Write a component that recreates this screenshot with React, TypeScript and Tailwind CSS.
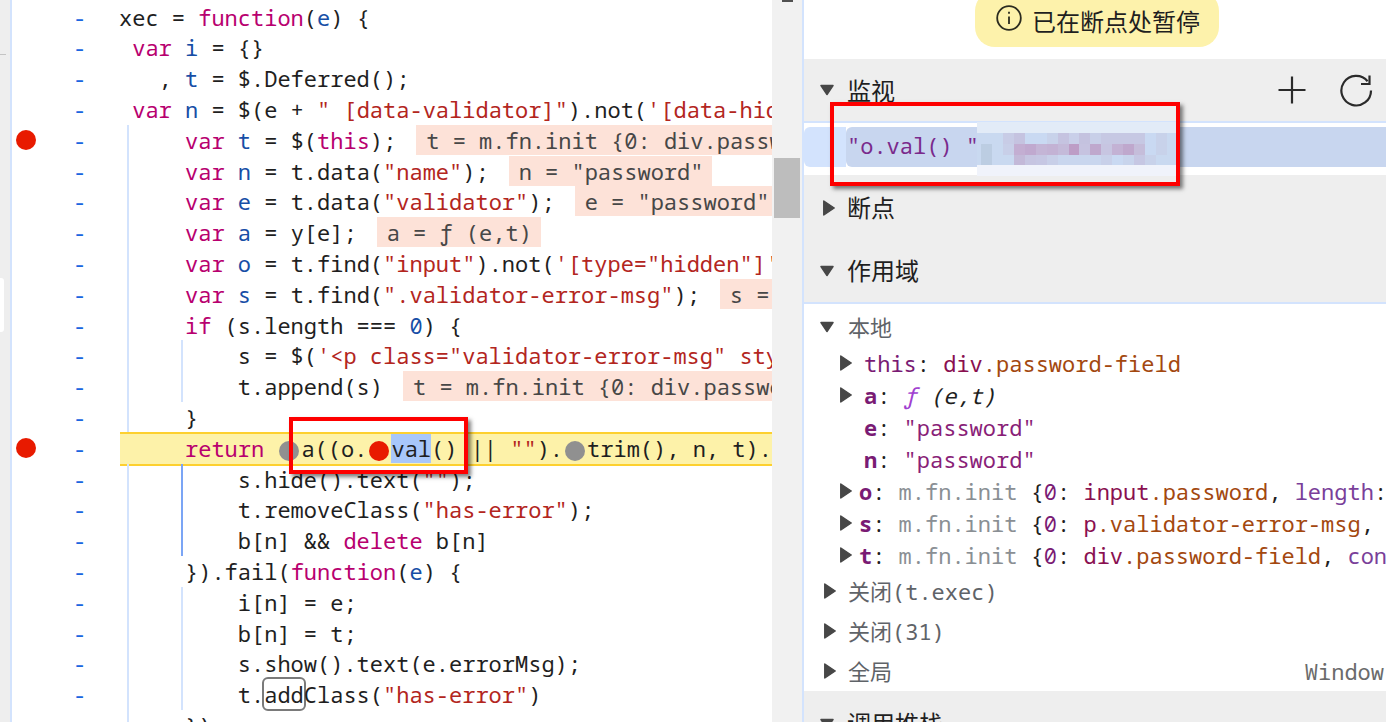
import type { ReactNode } from 'react'

const K = ({ children }: { children: ReactNode }) => <span className="text-[#b8006f]">{children}</span>
const D = ({ children }: { children: ReactNode }) => <span className="text-[#174ea6]">{children}</span>
const S = ({ children }: { children: ReactNode }) => <span className="text-[#b3261e]">{children}</span>

// inline debugger value next to a code line
const V = ({ children }: { children: ReactNode }) => (
  <span className="inline-block h-[30px] leading-[30px] ml-[20px] pl-[10px] pr-[9px] bg-[#fde2d8] text-[#474747] align-top">
    {children}
  </span>
)

const Dot = ({ red }: { red?: boolean }) => (
  <span className={`inline-block w-5 h-5 mx-[2px] rounded-full align-[-4px] ${red ? 'bg-[#e81a00]' : 'bg-[#909090]'}`} />
)

type Line = {
  code: ReactNode
  bp?: boolean
  guide?: boolean
  inner?: 'light' | 'strong'
  exec?: boolean
}

const LINES: Line[] = [
  { code: <>xec = <K>function</K>(<D>e</D>) {'{'}</> },
  { code: <> <K>var</K> <D>i</D> = {'{}'}</> },
  { code: <>   , <D>t</D> = $.Deferred();</> },
  { code: <> <K>var</K> <D>n</D> = $(e + <S>" [data-validator]"</S>).not(<S>'[data-hidden]'</S>)</> },
  { guide: true, bp: true, code: <>     <K>var</K> <D>t</D> = $(<K>this</K>);<V>t = m.fn.init {'{'}0: div.password-field{'}'}</V></> },
  { guide: true, code: <>     <K>var</K> <D>n</D> = t.data(<S>"name"</S>);<V>n = "password"</V></> },
  { guide: true, code: <>     <K>var</K> <D>e</D> = t.data(<S>"validator"</S>);<V>e = "password"</V></> },
  { guide: true, code: <>     <K>var</K> <D>a</D> = y[e];<V>a = ƒ (e,t)</V></> },
  { guide: true, code: <>     <K>var</K> <D>o</D> = t.find(<S>"input"</S>).not(<S>'[type="hidden"]'</S>)</> },
  { guide: true, code: <>     <K>var</K> <D>s</D> = t.find(<S>".validator-error-msg"</S>);<V>s = m.fn.init</V></> },
  { guide: true, code: <>     <K>if</K> (s.length === <D>0</D>) {'{'}</> },
  { guide: true, inner: 'light', code: <>         s = $(<S>'&lt;p class="validator-error-msg" style="display:none"&gt;'</S>)</> },
  { guide: true, inner: 'light', code: <>         t.append(s)<V>t = m.fn.init {'{'}0: div.password-field{'}'}</V></> },
  { guide: true, code: <>     {'}'}</> },
  {
    bp: true,
    exec: true,
    code: (
      <>
        {'     '}<K>return</K> <Dot />a((o.<Dot red /><span className="bg-[#a8c7fa]">val</span>() || <S>""</S>).<Dot />trim(), n, t).done(function
      </>
    ),
  },
  { guide: true, inner: 'strong', code: <>         s.hide().text(<S>""</S>);</> },
  { guide: true, inner: 'strong', code: <>         t.removeClass(<S>"has-error"</S>);</> },
  { guide: true, inner: 'strong', code: <>         b[n] &amp;&amp; <K>delete</K> b[n]</> },
  { guide: true, code: <>     {'}'}).fail(<K>function</K>(<D>e</D>) {'{'}</> },
  { guide: true, inner: 'light', code: <>         i[n] = e;</> },
  { guide: true, inner: 'light', code: <>         b[n] = t;</> },
  { guide: true, inner: 'light', code: <>         s.show().text(e.errorMsg);</> },
  {
    guide: true,
    inner: 'light',
    code: <>         t.<span className="inline-block h-[30px] leading-[30px] outline-2 outline-[#7a7a7a] rounded-[4px] align-top">add</span>Class(<S>"has-error"</S>)</>,
  },
  { guide: true, code: <>     {'}'})</> },
]

const BLUR_X = [981, 992, 1003, 1014, 1025, 1036, 1047, 1058, 1069, 1079, 1090, 1101, 1112, 1123, 1134, 1145, 1156, 1167]
const BLUR_ROWS: { y: number; h: number; cells: string[] }[] = [
  {
    y: 11,
    h: 11,
    cells: ['c9d9f0', 'c9d9f0', 'c8cce6', 'c5c3e0', 'c9d9f2', 'c9d9f2', 'c8d2ea', 'c5c3e0', 'c9cfe9', 'c4c2df', 'c8cfe8', 'c6c8e3', 'c6c8e3', 'c6c8e3', 'c6c8e3', 'c9d9f2', 'c8d2ea', 'c9d9f0'],
  },
  {
    y: 22,
    h: 11,
    cells: ['bccde2', 'c9d9f0', 'c8cfe8', 'c3aed2', 'c0a9cf', 'c4b5d6', 'c3b2d4', 'c4bad9', 'bd9dc6', 'c6c3e0', 'bfa8cd', 'c7c5e1', 'c3b2d4', 'bfa8cd', 'c5bdda', 'c9d9f2', 'c8d2ea', 'c9d9f0'],
  },
  {
    y: 33,
    h: 10,
    cells: ['bccde2', 'c9d9f0', 'c9d9f0', 'c3b9d8', 'c6c5e1', 'c6c7e3', 'c8cfe8', 'c9d6ee', 'c9d6ee', 'c9d6ee', 'c9d6ee', 'c8d0e9', 'c9d9f2', 'c8d4ec', 'c6c7e3', 'c8d2ea', 'c9d9f0', 'c9d9f0'],
  },
]

function TriDown() {
  return (
    <svg width="14" height="12" viewBox="0 0 14 12" className="shrink-0">
      <path d="M1 1.5h12L7 10.5z" fill="#474747" stroke="#474747" strokeWidth="1.5" strokeLinejoin="round" />
    </svg>
  )
}

function TriRight() {
  return (
    <svg width="12" height="16" viewBox="0 0 12 16" className="shrink-0">
      <path d="M0.8 1v14L11.2 8z" fill="#474747" stroke="#474747" strokeWidth="1.5" strokeLinejoin="round" />
    </svg>
  )
}

function CodeRow({ line }: { line: Line }) {
  return (
    <div className="relative flex h-[30.8px] leading-[30.8px]">
      <div className="w-[61px] shrink-0 flex items-center">
        {line.bp && <span className="ml-[4px] w-5 h-5 rounded-full bg-[#e81a00]" />}
      </div>
      <div className="w-[46px] shrink-0 text-[#1a66e0]">-</div>
      {line.exec ? (
        <div className="relative flex-1 min-w-0 h-[34px] -mt-[0.6px] ml-[1px] leading-[28px] border-y-2 border-[#fdd02f] bg-[#fdf2a9] whitespace-pre overflow-hidden text-[#1f1f1f]">
          <span className="-ml-[1px]">{line.code}</span>
        </div>
      ) : (
        <div className="relative flex-1 min-w-0 whitespace-pre text-[#1f1f1f]">
          {line.guide && <span className="absolute left-[8px] inset-y-0 w-[2px] bg-[#d3e3fd]" />}
          {line.inner && (
            <span className={`absolute left-[62px] inset-y-0 w-[2px] ${line.inner === 'strong' ? 'bg-[#7ba5f5]' : 'bg-[#d3e3fd]'}`} />
          )}
          <span className="relative">{line.code}</span>
        </div>
      )}
    </div>
  )
}

function SectionHeader({ title, open, height }: { title: string; open?: boolean; height: string }) {
  return (
    <div className={`flex items-center shrink-0 ${height} pl-[16px] bg-[#eeeeee] text-[24px] text-[#1f1f1f]`}>
      <span className="w-[27px] flex">{open ? <TriDown /> : <span className="ml-[3px] flex"><TriRight /></span>}</span>
      <span>{title}</span>
    </div>
  )
}

function ScopeRow({ arrow, children }: { arrow?: boolean; children: ReactNode }) {
  return (
    <div className="flex items-center shrink-0 h-[32px] whitespace-pre">
      <span className="w-[48px] pl-[36px] shrink-0 flex">{arrow && <TriRight />}</span>
      {children}
    </div>
  )
}

const Key = ({ children }: { children: ReactNode }) => <b className="text-[#7a1b74]">{children}</b>
const Tag = ({ children }: { children: ReactNode }) => <span className="text-[#8a1050]">{children}</span>
const Cls = ({ children }: { children: ReactNode }) => <span className="text-[#a3480f]">{children}</span>

function InitValue({ children }: { children: ReactNode }) {
  return (
    <>
      <span className="text-[#1f1f1f]">: </span>
      <span className="text-[#8a8f94]">m.fn.init </span>
      <span className="text-[#1f1f1f]">{'{'}</span>
      <span className="text-[#7a1b74]">0</span>
      <span className="text-[#1f1f1f]">: </span>
      {children}
    </>
  )
}

function GroupRow({ label, right }: { label: string; right?: string }) {
  return (
    <div className="flex items-center shrink-0 h-[40px] pl-[20px] pr-[2px] text-[#5f6368] whitespace-pre">
      <span className="w-[24px] flex"><TriRight /></span>
      <span>{label}</span>
      {right && <span className="ml-auto text-[#6b6b6b]">{right}</span>}
    </div>
  )
}

export default function App() {
  return (
    <div className="relative flex h-[722px] w-[1386px] overflow-hidden bg-white text-[22px] font-['Noto_Sans_Mono','DejaVu_Sans_Mono','Noto_Sans_CJK_SC',monospace]">
      {/* left rail */}
      <div className="relative w-[12px] shrink-0 bg-[#eeeeee] border-r-2 border-[#d3e3fd]">
        <span className="absolute left-0 top-[54px] w-[6px] h-[1px] bg-[#c4c4c4]" />
        <span className="absolute left-0 top-[278px] w-[4px] h-[54px] rounded-r-[3px] bg-white" />
      </div>

      {/* source */}
      <div className="w-[760px] shrink-0 overflow-hidden pt-[1.6px]">
        {LINES.map((line, i) => (
          <CodeRow key={i} line={line} />
        ))}
      </div>

      {/* scrollbar */}
      <div className="relative w-[30px] shrink-0 bg-[#f1f1f1]">
        <span className="absolute left-[10px] top-0 w-[11px] h-[2px] bg-[#505050]" />
        <span className="absolute left-[2px] top-[158px] w-[26px] h-[60px] bg-[#bdbdbd]" />
      </div>

      {/* debugger sidebar */}
      <div className="flex-1 min-w-0 border-l-2 border-[#d3e3fd] flex flex-col">
        <div className="h-[59px] shrink-0 flex justify-center pl-[4px]">
          <div className="flex items-center gap-[10px] w-[244px] h-[56px] -mt-[9px] pl-[21px] pt-[3px] rounded-[20px] bg-[#fdf2ab] text-[24px] text-[#1f1f1f] font-['Noto_Sans_CJK_SC',sans-serif]">
            <svg width="26" height="26" viewBox="0 0 26 26" className="-mt-[6px] shrink-0">
              <circle cx="13" cy="13" r="11.8" fill="none" stroke="#2b2b1f" strokeWidth="1.8" />
              <path d="M13 11.5v7.5M13 6.8v2" stroke="#2b2b1f" strokeWidth="1.8" />
            </svg>
            <span className="leading-none">已在断点处暂停</span>
          </div>
        </div>

        <div className="flex items-center h-[62px] shrink-0 pl-[16px] bg-[#eeeeee] text-[24px] text-[#1f1f1f]">
          <span className="w-[27px] flex"><TriDown /></span>
          <span className="pt-[1px]">监视</span>
          <span className="ml-auto mr-[13px] flex items-center gap-[33px]">
            <svg width="30" height="30" viewBox="0 0 30 30">
              <path d="M15 1.5v27M1.5 15h27" stroke="#2a2a2a" strokeWidth="2.2" />
            </svg>
            <svg width="33" height="33" viewBox="0 0 33 33">
              <path d="M27.6 7.2A14.8 14.8 0 1 0 31 16.5" fill="none" stroke="#2a2a2a" strokeWidth="2.2" />
              <path d="M29.5 1.5v8.5h-8.5" fill="none" stroke="#2a2a2a" strokeWidth="2.2" />
            </svg>
          </span>
        </div>
        <div className="h-[54px] shrink-0 border-t-2 border-[#d3e3fd] pt-[4px] bg-white">
          <div className="h-[40px] flex">
            <div className="w-[42px] rounded-l-[6px] bg-[#d3e3fd]" />
            <div className="flex-1 rounded-l-[6px] bg-[#c8d6ef] pl-[1px] leading-[36px] text-[#7a2a8c] whitespace-pre">"o.val() "</div>
          </div>
        </div>

        <SectionHeader title="断点" height="h-[65px]" />
        <SectionHeader title="作用域" height="h-[62px]" open />

        <div className="border-t-2 border-[#d3e3fd] pt-[7px] flex-1 shrink-0 flex flex-col">
          <div className="flex items-center shrink-0 h-[32px] mb-[4px] pl-[16px] text-[#5f6368]">
            <span className="w-[28px] flex"><TriDown /></span>
            <span>本地</span>
          </div>

          <ScopeRow arrow>
            <span className="ml-[12px] text-[#7a1b74]">this</span>
            <span className="text-[#1f1f1f]">: </span>
            <Tag>div</Tag>
            <Cls>.password-field</Cls>
          </ScopeRow>
          <ScopeRow arrow>
            <span className="ml-[12px]"><Key>a</Key></span>
            <span className="text-[#1f1f1f]">: </span>
            <i className="text-[#a040d0]">ƒ</i>
            <i className="text-[#1f1f1f]"> (e,t)</i>
          </ScopeRow>
          <ScopeRow>
            <span className="ml-[12px]"><Key>e</Key></span>
            <span className="text-[#1f1f1f]">: </span>
            <span className="text-[#8a1f78]">"password"</span>
          </ScopeRow>
          <ScopeRow>
            <span className="ml-[12px]"><Key>n</Key></span>
            <span className="text-[#1f1f1f]">: </span>
            <span className="text-[#8a1f78]">"password"</span>
          </ScopeRow>
          <ScopeRow arrow>
            <span className="ml-[7px]"><Key>o</Key></span>
            <InitValue>
              <Tag>input</Tag>
              <Cls>.password</Cls>
              <span className="text-[#1f1f1f]">, </span>
              <span className="text-[#7a3f9a]">length</span>
              <span className="text-[#1f1f1f]">:</span>
            </InitValue>
          </ScopeRow>
          <ScopeRow arrow>
            <span className="ml-[7px]"><Key>s</Key></span>
            <InitValue>
              <Tag>p</Tag>
              <Cls>.validator-error-msg</Cls>
              <span className="text-[#1f1f1f]">,</span>
            </InitValue>
          </ScopeRow>
          <ScopeRow arrow>
            <span className="ml-[7px]"><Key>t</Key></span>
            <InitValue>
              <Tag>div</Tag>
              <Cls>.password-field</Cls>
              <span className="text-[#1f1f1f]">, </span>
              <span className="text-[#7a3f9a]">con</span>
            </InitValue>
          </ScopeRow>

          <GroupRow label="关闭(t.exec)" />
          <GroupRow label="关闭(31)" />
          <GroupRow label="全局" right="Window" />

          <SectionHeader title="调用堆栈" height="h-[65px]" open />
        </div>
      </div>

      {/* pixelated patch over the watch value */}
      <svg width="201" height="54" viewBox="0 0 201 54" className="absolute left-[977px] top-[122px]" shapeRendering="crispEdges">
        <rect width="201" height="11" fill="#e2ebf7" />
        <rect y="11" width="201" height="32" fill="#c9d9f0" />
        <rect y="43" width="201" height="11" fill="#f0f3fb" />
        {BLUR_ROWS.map(row =>
          row.cells.map((c, i) => (
            <rect key={`${row.y}-${i}`} x={BLUR_X[i] - 977} y={row.y} width="11" height={row.h} fill={`#${c}`} />
          ))
        )}
      </svg>

      {/* red annotation boxes */}
      <div className="absolute z-20 left-[289px] top-[417px] w-[179px] h-[57px] border-4 border-[#fe0000] shadow-[3px_3px_4px_rgba(0,0,0,0.5)]" />
      <div className="absolute z-20 left-[830px] top-[102px] w-[350px] h-[84px] border-4 border-[#fe0000] shadow-[3px_3px_4px_rgba(0,0,0,0.5)]" />
    </div>
  )
}
